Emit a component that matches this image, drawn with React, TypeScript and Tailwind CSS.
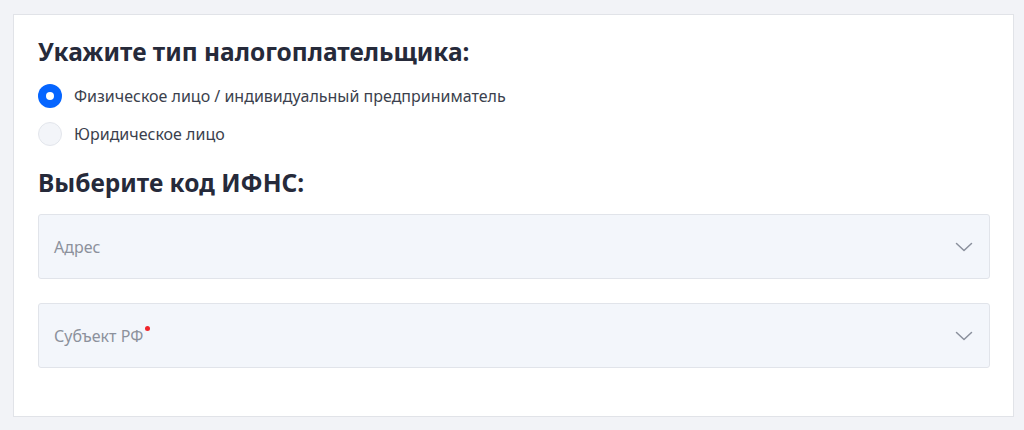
import React from "react";

function Chevron() {
  return (
    <svg width="18" height="10" viewBox="0 0 18 10" fill="none" className="shrink-0">
      <path d="M1.5 1.5 L9 8.5 L16.5 1.5" stroke="#8a909c" strokeWidth="1.5" strokeLinecap="round" strokeLinejoin="round" />
    </svg>
  );
}

function Radio({ checked, label }: { checked?: boolean; label: string }) {
  return (
    <label className="flex items-center gap-[12px] h-[24px]">
      {checked ? (
        <span className="w-[24px] h-[24px] rounded-full bg-[#0565ff] flex items-center justify-center shrink-0">
          <span className="w-[8px] h-[8px] rounded-full bg-white" />
        </span>
      ) : (
        <span className="w-[24px] h-[24px] rounded-full bg-[#f3f5f9] border border-[#e3e6ec] shrink-0" />
      )}
      <span className="text-[16px] text-[#3b3f4d]">{label}</span>
    </label>
  );
}

function Select({ label, required }: { label: string; required?: boolean }) {
  return (
    <div className="h-[65px] bg-[#f3f6fb] border border-[#e1e4ea] rounded-[3px] flex items-center justify-between pl-[15px] pr-[16px]">
      <span className="text-[16px] text-[#8c919c] relative">
        {label}
        {required && <span className="absolute -right-[7px] top-[2px] w-[5px] h-[5px] rounded-full bg-[#f0262b]" />}
      </span>
      <Chevron />
    </div>
  );
}

export default function App() {
  return (
    <div className="w-[1024px] h-[430px] bg-[#f2f3f7] pt-[14px] pl-[13px] pr-[10px]" style={{ fontFamily: '"Noto Sans", "Open Sans", sans-serif' }}>
      <div className="bg-white border border-[#e1e3e8] h-[403px] pl-[24px] pr-[23px] pt-[22px]">
        <h2 className="text-[24.5px] font-bold text-[#262a3a] leading-[30px]">Укажите тип налогоплательщика:</h2>
        <div className="mt-[17px] flex flex-col gap-[14px]">
          <Radio checked label="Физическое лицо / индивидуальный предприниматель" />
          <Radio label="Юридическое лицо" />
        </div>
        <h2 className="mt-[22px] text-[24.5px] font-bold text-[#262a3a] leading-[30px]">Выберите код ИФНС:</h2>
        <div className="mt-[16px] flex flex-col gap-[24px]">
          <Select label="Адрес" />
          <Select label="Субъект РФ" required />
        </div>
      </div>
    </div>
  );
}
